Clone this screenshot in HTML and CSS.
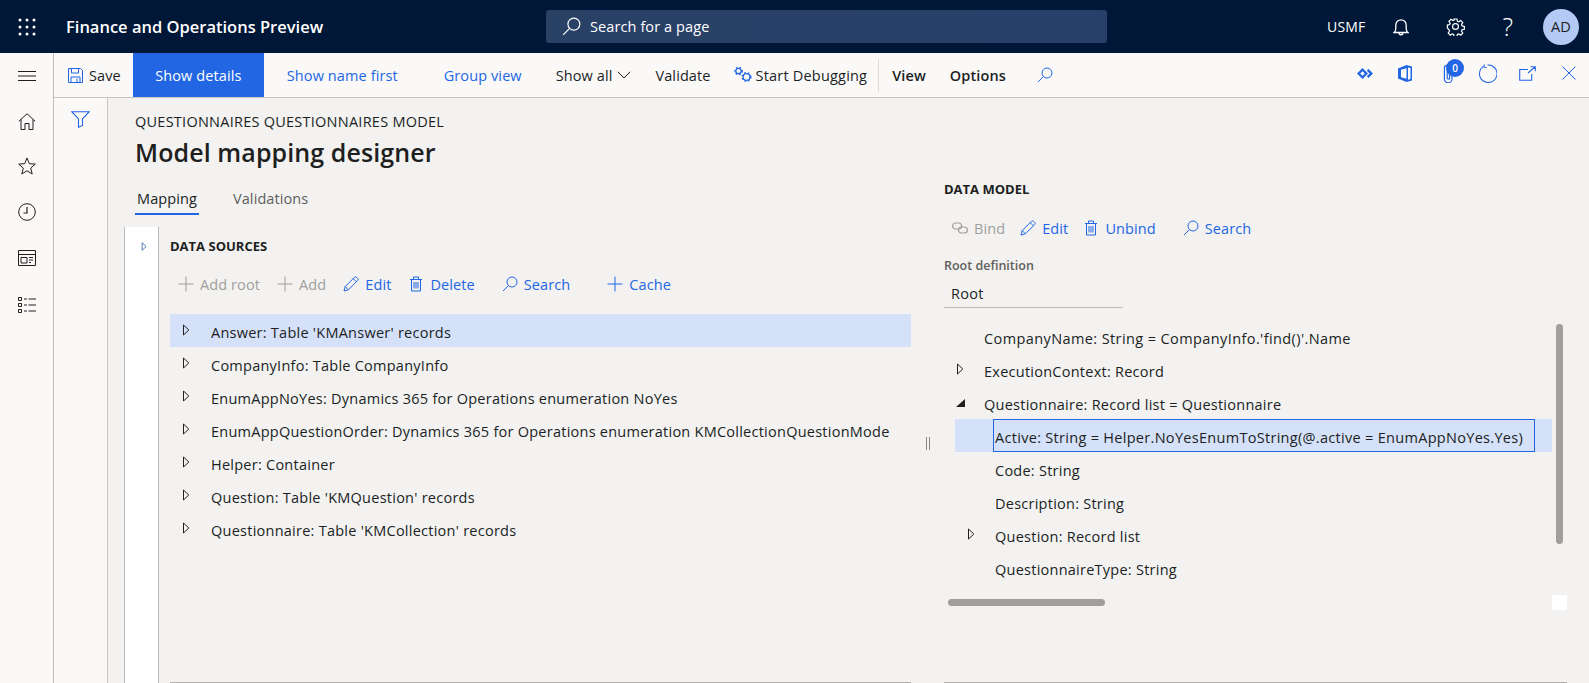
FILE: index.html
```html
<!DOCTYPE html>
<html lang="en">
<head>
<meta charset="utf-8">
<title>Model mapping designer</title>
<link rel="stylesheet" href="styles.css">
</head>
<body>
<svg class="defs" width="0" height="0" aria-hidden="true">
  <symbol id="i-search" viewBox="0 0 16 16"><circle cx="10" cy="6" r="5" fill="none" stroke="currentColor"/><path d="M6.400 9.600 1 15" fill="none" stroke="currentColor"/></symbol>
  <symbol id="i-plus" viewBox="0 0 16 16"><path d="M8 .5v15M.5 8h15" fill="none" stroke="currentColor"/></symbol>
  <symbol id="i-edit" viewBox="0 0 16 16"><path d="M1 15l1.200-4.400L11.400 1.400a1.600 1.600 0 0 1 2.300 0l.9.9a1.600 1.600 0 0 1 0 2.300L5.400 13.800zM2.200 10.600l3.200 3.200M10.200 2.600l3.200 3.200" fill="none" stroke="currentColor"/></symbol>
  <symbol id="i-trash" viewBox="0 0 16 16"><path d="M2 3.500h12M5.500 3.500V1h5v2.500M3.500 3.500V15h9V3.500M6 6v6.500M8 6v6.500M10 6v6.500" fill="none" stroke="currentColor"/></symbol>
  <symbol id="i-right" viewBox="0 0 8 12"><path d="M1.500 1 6.800 6 1.500 11z" fill="none" stroke="currentColor"/></symbol>
</svg>

<header class="topbar">
  <svg class="waffle" width="18" height="18" viewBox="0 0 18 18" aria-hidden="true"><g fill="#fff"><circle cx="2" cy="2" r="1.500"/><circle cx="9" cy="2" r="1.500"/><circle cx="16" cy="2" r="1.500"/><circle cx="2" cy="9" r="1.500"/><circle cx="9" cy="9" r="1.500"/><circle cx="16" cy="9" r="1.500"/><circle cx="2" cy="16" r="1.500"/><circle cx="9" cy="16" r="1.500"/><circle cx="16" cy="16" r="1.500"/></g></svg>
  <div class="app-title">Finance and Operations Preview</div>
  <div class="searchbox">
    <svg class="ic19" aria-hidden="true"><use href="#i-search"/></svg>
    <span>Search for a page</span>
  </div>
  <div class="company">USMF</div>
  <svg class="bell" width="16" height="18" viewBox="0 0 16 18" aria-hidden="true"><path d="M1 14.500c1.300-1 1.800-2.200 1.800-4V7a5.200 5.200 0 0 1 10.400 0v3.500c0 1.800.5 3 1.800 4zM6 14.500c0 3 4 3 4 0" fill="none" stroke="#fff" stroke-width="1.300"/></svg>
  <svg class="gear" width="19" height="19" viewBox="0 0 24 24" aria-hidden="true"><path d="M10 1.500h4l.7 3.200 1.800.8 2.800-1.800 2.900 2.900-1.800 2.800.8 1.800 3.200.7v4l-3.200.7-.8 1.800 1.800 2.800-2.900 2.900-2.800-1.800-1.800.8-.7 3.200h-4l-.7-3.200-1.800-.8-2.800 1.800-2.900-2.900 1.800-2.800-.8-1.800L.6 14v-4l3.200-.7.8-1.800-1.800-2.800 2.900-2.900 2.800 1.800 1.800-.8z" transform="translate(1.200 1.200) scale(.9)" fill="none" stroke="#fff" stroke-width="1.700"/><circle cx="12" cy="12" r="3.700" fill="none" stroke="#fff" stroke-width="1.500"/></svg>
  <div class="help">?</div>
  <div class="avatar">AD</div>
</header>

<div class="body-row">
  <nav class="sidenav">
    <svg class="nav-burger" width="18" height="10" viewBox="0 0 18 10" aria-hidden="true"><path d="M0 .5h18M0 5h18M0 9.500h18" stroke="#201f1e" fill="none"/></svg>
    <svg class="nav-ic mb27" width="18" height="17" viewBox="0 0 18 17" aria-hidden="true"><path d="M.8 8.300 9 .8l8.200 7.500M3 6.500v10h4v-6h4v6h4v-10" fill="none" stroke="#201f1e"/></svg>
    <svg class="nav-ic mb28" width="18" height="18" viewBox="0 0 18 18" aria-hidden="true"><path d="M9 1l2.300 5.700 6 .4-4.600 3.900 1.500 5.900L9 13.800 3.800 17l1.500-5.900L.7 7.100l6-.4z" fill="none" stroke="#201f1e"/></svg>
    <svg class="nav-ic mb29" width="18" height="18" viewBox="0 0 18 18" aria-hidden="true"><circle cx="9" cy="9" r="8.300" fill="none" stroke="#201f1e"/><path d="M9 4v6H5.500" fill="none" stroke="#201f1e" stroke-width="1.200"/></svg>
    <svg class="nav-ic mb31" width="18" height="16" viewBox="0 0 18 16" aria-hidden="true"><path d="M.5.500h17v15H.5zM.5 4.500h17M3 7.500h6v5.500H3zM11 7.500h4M11 10h4M11 12.500h2" fill="none" stroke="#201f1e"/></svg>
    <svg class="nav-ic" width="18" height="16" viewBox="0 0 18 16" aria-hidden="true"><path d="M.5.500h3v3h-3zM.5 6.500h3v3h-3zM.5 12.500h3v3h-3zM6 2h3M10.500 2H18M6 8h3M10.500 8H18M6 14h3M10.500 14H18" fill="none" stroke="#201f1e"/></svg>
  </nav>

  <div class="page">
    <div class="cmdbar">
      <button class="cmd save"><svg width="15" height="15" viewBox="0 0 15 15" aria-hidden="true"><path d="M.5.500h12l2 2v12H.5zM3.500.500v4.500h7V.500M3 14.500V9h9v5.500M9 10.500v4" fill="none" stroke="#2266e3"/></svg>Save</button>
      <button class="cmd primary">Show details</button>
      <button class="cmd link name-first">Show name first</button>
      <button class="cmd link group">Group view</button>
      <button class="cmd showall">Show all<svg width="14" height="8" viewBox="0 0 14 8" aria-hidden="true"><path d="M.8.800 7 7l6.200-6.200" fill="none" stroke="#201f1e"/></svg></button>
      <button class="cmd validate">Validate</button>
      <button class="cmd debug"><svg width="19" height="16" viewBox="0 0 19 16" aria-hidden="true"><g fill="none" stroke="#2266e3" stroke-width="1.300"><circle cx="4.500" cy="4" r="2.700"/><circle cx="12.500" cy="10" r="3.400"/></g><g fill="none" stroke="#2266e3" stroke-width="1.500" stroke-dasharray="1.500 2"><circle cx="4.500" cy="4" r="3.600"/><circle cx="12.500" cy="10" r="4.300"/></g></svg>Start Debugging</button>
      <span class="cmd-sep"></span>
      <button class="cmd strong view">View</button>
      <button class="cmd strong options">Options</button>
      <svg class="cmd-search ic16" aria-hidden="true"><use href="#i-search"/></svg>
      <div class="cmd-right">
        <svg width="16" height="11" viewBox="0 0 16 11" aria-hidden="true"><path fill="#2266e3" fill-rule="evenodd" d="M5.500 0 11 5.500 5.500 11 0 5.500zM5.500 3.200 3.200 5.500l2.300 2.300 2.300-2.300zM11.500 1 16 5.500 11.500 10 9.800 8.300 12.600 5.500 9.800 2.700z"/></svg>
        <svg width="14" height="17" viewBox="0 0 14 17" aria-hidden="true"><path d="M0 3.500 8.500 0 14 1.500v14L8.500 17 0 13.500z" fill="#2266e3"/><path d="M3 4.800 8.500 3.200v10.500L3 12.300z" fill="#faf9f8"/><path d="M10 2.500l2.500.6v11l-2.500.6z" fill="#faf9f8"/></svg>
        <span class="clip">
          <svg width="10" height="19" viewBox="0 0 10 19" aria-hidden="true"><path d="M9 5v10a3.800 3.800 0 0 1-7.600 0V4a2.600 2.600 0 0 1 5.200 0v10a1.200 1.200 0 0 1-2.400 0V6" fill="none" stroke="#2266e3" stroke-width="1.200"/></svg>
          <span class="badge">0</span>
        </span>
        <svg width="19" height="19" viewBox="0 0 18 18" aria-hidden="true"><path d="M5.200 2.200A8.300 8.300 0 1 0 9 .9M6 .5l-.3 2.500 2.600.4" fill="none" stroke="#2266e3"/></svg>
        <svg class="open" width="17" height="15" viewBox="0 0 17 15" aria-hidden="true"><path d="M9 3.500H.7v10.800h12V8M9 7l7-6M11.500.7h4.800v4.600" fill="none" stroke="#2266e3" stroke-width="1.100"/></svg>
        <svg class="close" width="14" height="14" viewBox="0 0 14 14" aria-hidden="true"><path d="M.5.500l13 13M13.500.500l-13 13" fill="none" stroke="#2266e3"/></svg>
      </div>
    </div>

    <div class="page-body">
      <aside class="filter-pane">
        <svg width="19" height="17" viewBox="0 0 19 17" aria-hidden="true"><path d="M.8.700h17.400L11.500 8v6.500L7.500 16.300V8z" fill="none" stroke="#2266e3" stroke-width="1.100"/></svg>
      </aside>
      <main class="content">
        <div class="crumb">QUESTIONNAIRES QUESTIONNAIRES MODEL</div>
        <h1 class="title">Model mapping designer</h1>
        <div class="split">
          <section class="left">
            <div class="tabs">
              <span class="tab active">Mapping</span>
              <span class="tab">Validations</span>
            </div>
            <div class="mapping">
              <div class="strip"><svg class="arrow-strip" width="6" height="9" aria-hidden="true"><use href="#i-right"/></svg></div>
              <div class="sources">
                <h2 class="sec">DATA SOURCES</h2>
                <div class="tools tools-left">
                  <span class="tool off"><svg class="ic16" aria-hidden="true"><use href="#i-plus"/></svg>Add root</span>
                  <span class="tool off"><svg class="ic16" aria-hidden="true"><use href="#i-plus"/></svg>Add</span>
                  <span class="tool"><svg class="ic16" aria-hidden="true"><use href="#i-edit"/></svg>Edit</span>
                  <span class="tool"><svg class="ic16" aria-hidden="true"><use href="#i-trash"/></svg>Delete</span>
                  <span class="tool gap-search"><svg class="ic16" aria-hidden="true"><use href="#i-search"/></svg>Search</span>
                  <span class="tool gap-cache"><svg class="ic16" aria-hidden="true"><use href="#i-plus"/></svg>Cache</span>
                </div>
                <ul class="tree tree-left">
                  <li class="row sel"><svg class="arrow" width="8" height="12" aria-hidden="true"><use href="#i-right"/></svg>Answer: Table 'KMAnswer' records</li>
                  <li class="row"><svg class="arrow" width="8" height="12" aria-hidden="true"><use href="#i-right"/></svg>CompanyInfo: Table CompanyInfo</li>
                  <li class="row"><svg class="arrow" width="8" height="12" aria-hidden="true"><use href="#i-right"/></svg>EnumAppNoYes: Dynamics 365 for Operations enumeration NoYes</li>
                  <li class="row"><svg class="arrow" width="8" height="12" aria-hidden="true"><use href="#i-right"/></svg>EnumAppQuestionOrder: Dynamics 365 for Operations enumeration KMCollectionQuestionMode</li>
                  <li class="row"><svg class="arrow" width="8" height="12" aria-hidden="true"><use href="#i-right"/></svg>Helper: Container</li>
                  <li class="row"><svg class="arrow" width="8" height="12" aria-hidden="true"><use href="#i-right"/></svg>Question: Table 'KMQuestion' records</li>
                  <li class="row"><svg class="arrow" width="8" height="12" aria-hidden="true"><use href="#i-right"/></svg>Questionnaire: Table 'KMCollection' records</li>
                </ul>
              </div>
            </div>
          </section>
          <div class="splitter"><span class="grip"></span></div>
          <section class="right">
            <h2 class="sec">DATA MODEL</h2>
            <div class="tools tools-right">
              <span class="tool off"><svg class="ic16" viewBox="0 0 16 16" aria-hidden="true"><g fill="none" stroke="currentColor" stroke-width="1.200"><rect x=".6" y="3" width="9" height="6" rx="3"/><rect x="6.400" y="7" width="9" height="6" rx="3"/></g></svg>Bind</span>
              <span class="tool"><svg class="ic16" aria-hidden="true"><use href="#i-edit"/></svg>Edit</span>
              <span class="tool"><svg class="ic16" aria-hidden="true"><use href="#i-trash"/></svg>Unbind</span>
              <span class="tool gap-search2"><svg class="ic16" aria-hidden="true"><use href="#i-search"/></svg>Search</span>
            </div>
            <div class="field-label">Root definition</div>
            <div class="field">Root</div>
            <div class="model-tree">
              <ul class="tree">
                <li class="mrow lv0 wide">CompanyName: String = CompanyInfo.'find()'.Name</li>
                <li class="mrow lv0"><svg class="marrow" width="8" height="12" aria-hidden="true"><use href="#i-right"/></svg>ExecutionContext: Record</li>
                <li class="mrow lv0"><svg class="mopen" width="10" height="8" viewBox="0 0 10 8" aria-hidden="true"><path d="M9 0v8H0z" fill="#201f1e"/></svg>Questionnaire: Record list = Questionnaire</li>
                <li class="mrow lv1 sel"><span class="focus">Active: String = Helper.NoYesEnumToString(@.active = EnumAppNoYes.Yes)</span></li>
                <li class="mrow lv1">Code: String</li>
                <li class="mrow lv1">Description: String</li>
                <li class="mrow lv1"><svg class="marrow2" width="8" height="12" aria-hidden="true"><use href="#i-right"/></svg>Question: Record list</li>
                <li class="mrow lv1">QuestionnaireType: String</li>
              </ul>
              <span class="vscroll"></span>
              <span class="hscroll"></span>
              <span class="corner"></span>
            </div>
          </section>
        </div>
      </main>
    </div>
  </div>
</div>
</body>
</html>
```
FILE: styles.css
```css
* { box-sizing: border-box; }
html, body { margin: 0; height: 683px; overflow: hidden; }
body { font-family: "Open Sans", "Liberation Sans", sans-serif; font-size: 14.5px; letter-spacing: .25px; color: #201f1e; background: #f3f2f1; }
.defs { position: absolute; }
button { font: inherit; letter-spacing: inherit; color: inherit; background: none; border: 0; padding: 0; }
h1, h2, ul { margin: 0; padding: 0; }
ul { list-style: none; }
svg { display: block; flex: none; }
.ic16 { width: 16px; height: 16px; }
.ic19 { width: 19px; height: 19px; }

.topbar { height: 53px; background: #001737; color: #fff; display: flex; align-items: center; }
.waffle { margin-left: 18px; }
.app-title { margin-left: 30px; width: 480px; font-size: 16.5px; font-weight: 600; letter-spacing: 0; }
.searchbox { width: 561px; height: 33px; background: linear-gradient(90deg, #2a4166, #27406a); border-radius: 3px; display: flex; align-items: center; gap: 9px; padding-left: 16px; color: #fff; letter-spacing: .1px; }
.company { margin-left: 220px; width: 40px; font-size: 14px; letter-spacing: .2px; }
.bell { margin-left: 26px; }
.gear { margin-left: 37px; }
.help { margin-left: 35px; width: 16px; font-size: 25px; font-weight: 300; text-align: center; line-height: 1; }
.avatar { margin-left: 27px; width: 36px; height: 36px; border-radius: 50%; background: #b4c9f4; color: #201f1e; display: flex; align-items: center; justify-content: center; }

.body-row { display: flex; height: 630px; }
.sidenav { width: 54px; flex: none; background: #faf9f8; border-right: 1px solid #bcbbba; display: flex; flex-direction: column; align-items: center; padding-top: 18px; }
.nav-burger { margin-bottom: 32px; }
.mb27 { margin-bottom: 27px; }
.mb28 { margin-bottom: 28px; }
.mb29 { margin-bottom: 29px; }
.mb31 { margin-bottom: 31px; }
.page { flex: 1; min-width: 0; display: flex; flex-direction: column; }

.cmdbar { height: 45px; flex: none; background: #faf9f8; border-bottom: 1px solid #c8c6c4; display: flex; align-items: center; letter-spacing: .1px; }
.cmd { display: flex; align-items: center; height: 44px; white-space: nowrap; }
.save { margin-left: 14px; gap: 6px; }
.primary { margin-left: 12px; width: 131px; justify-content: center; background: #2266e3; color: #fff; }
.link { color: #2266e3; }
.name-first { margin-left: 23px; }
.group { margin-left: 46px; }
.showall { margin-left: 34px; gap: 5px; }
.validate { margin-left: 24px; }
.debug { margin-left: 23px; gap: 3px; letter-spacing: .2px; }
.cmd-sep { width: 1px; height: 33px; background: #dedcda; margin-left: 11px; }
.strong { font-weight: 600; }
.view { margin-left: 13px; }
.options { margin-left: 24px; }
.cmd-search { margin-left: 31px; color: #2266e3; }
.cmd-right { margin-left: auto; margin-right: 13px; display: flex; align-items: center; gap: 25px; padding-bottom: 4px; }
.clip { position: relative; display: block; width: 10px; margin-left: 6px; }
.open { margin-left: -3px; }
.close { margin-left: 1px; }
.badge { position: absolute; left: 3px; top: -5px; width: 18px; height: 18px; border-radius: 50%; background: #2266e3; color: #fff; font-size: 10px; font-weight: 600; text-align: center; line-height: 18px; letter-spacing: 0; }

.page-body { flex: 1; display: flex; min-height: 0; }
.filter-pane { width: 54px; flex: none; background: #faf9f8; border-right: 1px solid #c8c6c4; padding: 13px 0 0 17px; }
.content { flex: 1; min-width: 0; padding: 14px 0 0 27px; }
.crumb { line-height: 20px; }
.title { font-size: 25px; font-weight: 600; letter-spacing: .1px; line-height: 32px; margin-top: 4px; }
.split { display: flex; margin-top: 11px; margin-left: -11px; }
.left { width: 796px; flex: none; }
.tabs { display: flex; padding-left: 11px; height: 48px; padding-top: 8px; letter-spacing: .1px; }
.tab { height: 34px; line-height: 24px; color: #605e5c; margin-right: 32px; padding: 0 2px; }
.tab.active { color: #201f1e; border-bottom: 2px solid #2266e3; height: 28px; }
.mapping { display: flex; height: 456px; }
.strip { width: 35px; flex: none; background: #fff; border-left: 1px solid #bcbbba; border-right: 1px solid #bcbbba; padding: 15px 0 0 16px; color: #1d4e9e; }
.sources { flex: 1; min-width: 0; padding-left: 11px; }
.sec { font-size: 13px; font-weight: 700; letter-spacing: 0; line-height: 20px; }
.sources .sec { margin-top: 9px; }
.tools { display: flex; align-items: center; color: #2266e3; letter-spacing: .1px; }
.tool { display: flex; align-items: center; gap: 6px; white-space: nowrap; }
.tool.off { color: #a19f9d; }
.tools-left { margin-top: 18px; height: 20px; padding-left: 8px; gap: 17px; }
.gap-search { margin-left: 10px; }
.gap-cache { margin-left: 20px; }
.tree-left { margin-top: 20px; height: 369px; border-bottom: 1px solid #b3b0ad; width: 741px; }
.row { height: 33px; display: flex; align-items: center; padding: 3px 0 0 12px; white-space: nowrap; }
.row.sel, .mrow.sel { background: #d5e1f9; }
.arrow { margin-right: 21px; position: relative; top: -2px; }

.splitter { width: 24px; flex: none; position: relative; }
.grip { position: absolute; left: 6px; top: 258px; width: 4px; height: 13px; border-left: 1px solid #8a8886; border-right: 1px solid #8a8886; }
.right { flex: 1; min-width: 0; }
.tools-right { margin-top: 19px; height: 20px; padding-left: 8px; gap: 15px; }
.gap-search2 { margin-left: 12px; }
.field-label { margin-top: 19px; font-size: 12.5px; font-weight: 600; letter-spacing: 0; color: #605e5c; line-height: 18px; }
.field { width: 179px; height: 33px; line-height: 30px; padding: 4px 0 0 7px; border-bottom: 1px solid #bcbbba; }
.model-tree { position: relative; margin-top: 12px; height: 363px; margin-right: 22px; border-bottom: 1px solid #b3b0ad; padding-left: 11px; }
.mrow { height: 33px; display: flex; align-items: center; position: relative; white-space: nowrap; width: 597px; padding-top: 3px; }
.lv0 { padding-left: 29px; }
.lv1 { padding-left: 40px; }
.wide { letter-spacing: .4px; }
.marrow { position: absolute; left: 1px; top: 10px; }
.marrow2 { position: absolute; left: 12px; top: 10px; }
.mopen { position: absolute; left: 1px; top: 13px; }
.focus { position: absolute; left: 38px; top: 0; height: 33px; width: 542px; border: 1px solid #2266e3; display: flex; align-items: center; padding: 3px 0 0 1px; letter-spacing: .3px; }
.vscroll { position: absolute; left: 612px; top: 4px; width: 7px; height: 220px; border-radius: 4px; background: #a19f9d; }
.hscroll { position: absolute; left: 4px; top: 279px; width: 157px; height: 7px; border-radius: 4px; background: #a19f9d; }
.corner { position: absolute; left: 608px; top: 275px; width: 15px; height: 15px; background: #fff; }
```
